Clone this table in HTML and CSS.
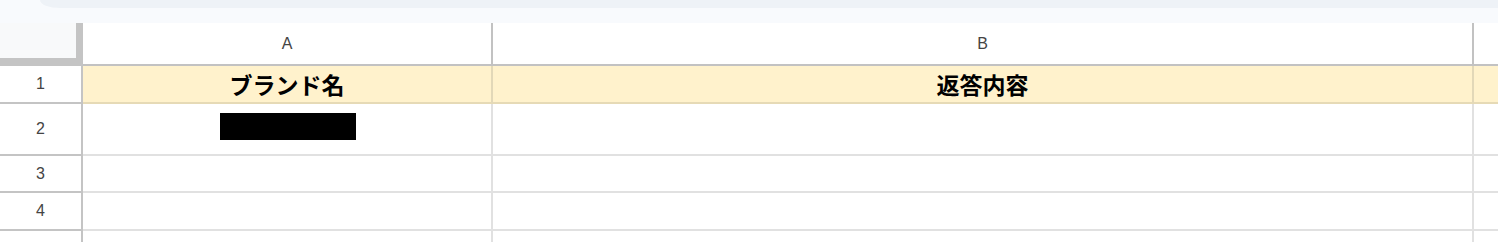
FILE: index.html
```html
<!DOCTYPE html>
<html lang="ja">
<head>
<meta charset="utf-8">
<title>Sheet</title>
<link rel="stylesheet" href="styles.css">
</head>
<body>
<div class="topbar"><div class="topband"></div></div>
<div class="sheet">
  <div class="corner"></div>
  <div class="colhead">A</div>
  <div class="colhead">B</div>
  <div class="colhead last"></div>

  <div class="rowhead">1</div>
  <div class="cell hl"><span class="title">ブランド名</span></div>
  <div class="cell hl"><span class="title">返答内容</span></div>
  <div class="cell hl last"></div>

  <div class="rowhead">2</div>
  <div class="cell"><span class="redact"></span></div>
  <div class="cell"></div>
  <div class="cell last"></div>

  <div class="rowhead">3</div>
  <div class="cell"></div>
  <div class="cell"></div>
  <div class="cell last"></div>

  <div class="rowhead">4</div>
  <div class="cell"></div>
  <div class="cell"></div>
  <div class="cell last"></div>

  <div class="rowhead open"></div>
  <div class="cell open"></div>
  <div class="cell open"></div>
  <div class="cell open last"></div>
</div>
</body>
</html>
```

FILE: styles.css
```css
html, body {
  margin: 0;
  padding: 0;
  background: #ffffff;
  overflow: hidden;
}
body {
  width: 1498px;
  height: 242px;
  font-family: "Liberation Sans", Arial, sans-serif;
}
.topbar {
  height: 23px;
  background: #f8fafd;
}
.topband {
  height: 8px;
  margin-left: 40px;
  background: #eef2f7;
  border-bottom-left-radius: 20px 8px;
}
.sheet {
  display: grid;
  grid-template-columns: 83px 410px 981px 24px;
  grid-template-rows: 43px 38px 52px 37px 38px 11px;
}
.sheet > div {
  box-sizing: border-box;
  display: flex;
  align-items: center;
  justify-content: center;
}
.corner {
  background: #f8f9fa;
  border-right: 7px solid #c4c4c4;
  border-bottom: 8px solid #c4c4c4;
}
.colhead {
  background: #ffffff;
  border-right: 2px solid #c2c2c2;
  border-bottom: 2px solid #c2c2c2;
  color: #444444;
  font-size: 16px;
}
.rowhead {
  background: #ffffff;
  border-right: 2px solid #c4c4c4;
  border-bottom: 2px solid #c4c4c4;
  color: #444444;
  font-size: 16px;
}
.cell {
  background: #ffffff;
  border-right: 2px solid #e1e1e1;
  border-bottom: 2px solid #e1e1e1;
}
.cell.hl {
  background: #fff2cc;
  border-right-color: #e2d8b8;
  border-bottom-color: #e6dab6;
}
.sheet > .last {
  border-right: none;
}
.sheet > .open {
  border-bottom: none;
}
.title {
  font-family: "Noto Sans CJK JP", "Noto Sans", sans-serif;
  font-weight: 700;
  font-size: 23px;
  color: #000000;
  line-height: 1;
}
.redact {
  display: block;
  width: 136px;
  height: 27px;
  background: #000000;
  margin-bottom: 5px;
  margin-left: 2px;
}
```
